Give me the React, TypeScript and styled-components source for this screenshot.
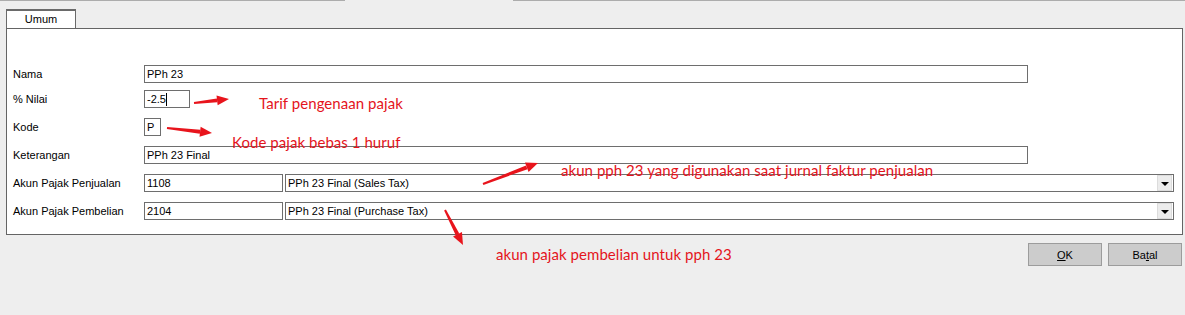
import React from "react";
import styled, { createGlobalStyle } from "styled-components";

const Global = createGlobalStyle`
  html, body { margin: 0; padding: 0; background: #eeeeee; }
  body {
    font-family: "Liberation Sans", Tahoma, Arial, sans-serif;
    font-size: 11px;
    color: #000;
  }
`;

const Page = styled.div`
  position: relative;
  width: 1185px;
  height: 315px;
  overflow: hidden;
  background: #eeeeee;
`;

const TopRule = styled.div`
  display: flex;
  height: 9px;
`;

const RuleSegment = styled.div<{ $w?: number; $line?: boolean }>`
  ${(p) => (p.$w ? `width: ${p.$w}px;` : "flex: 1;")}
  border-top: 1px solid ${(p) => (p.$line ? "#acacac" : "transparent")};
`;

const TabStrip = styled.div`
  display: flex;
  padding-left: 6px;
  height: 19px;
`;

const Tab = styled.div`
  box-sizing: border-box;
  width: 70px;
  height: 19px;
  border-top: 2px solid #6a6a6a;
  border-left: 1px solid #6a6a6a;
  border-right: 1px solid #6a6a6a;
  background: #ffffff;
  display: flex;
  align-items: center;
  justify-content: center;
  padding-bottom: 1px;
`;

const Panel = styled.div`
  box-sizing: border-box;
  margin-left: 6px;
  width: 1177px;
  height: 207px;
  border: 1px solid #646464;
  background: #ffffff;
  padding: 36px 0 0 6px;
  display: flex;
  flex-direction: column;
`;

const Row = styled.div<{ $mt: number }>`
  display: flex;
  align-items: center;
  height: 18px;
  margin-top: ${(p) => p.$mt}px;
`;

const Label = styled.div`
  width: 131px;
  flex: none;
`;

const Field = styled.div<{ $w: number }>`
  box-sizing: border-box;
  width: ${(p) => p.$w}px;
  height: 18px;
  border: 1px solid #6e6e6e;
  padding: 0 2px 0 2px;
  display: flex;
  align-items: center;
  flex: none;
  white-space: nowrap;
  background: #fff;
`;

const Caret = styled.span`
  display: inline-block;
  width: 1px;
  height: 13px;
  background: #000;
`;

const Combo = styled(Field)`
  margin-left: 2px;
  padding-right: 1px;
  justify-content: space-between;
`;

const ComboButton = styled.div`
  box-sizing: border-box;
  width: 15px;
  height: 16px;
  background: #ececec;
  border: 1px solid #dcdcdc;
  display: flex;
  align-items: center;
  justify-content: center;
`;

const Triangle = styled.div`
  width: 0;
  height: 0;
  border-left: 4px solid transparent;
  border-right: 4px solid transparent;
  border-top: 4px solid #000;
  margin-top: 1px;
`;

const ButtonRow = styled.div`
  display: flex;
  justify-content: flex-end;
  gap: 6px;
  margin-top: 8px;
  padding-right: 3px;
`;

const Button = styled.div`
  box-sizing: border-box;
  width: 74px;
  height: 23px;
  background: #cccccc;
  border: 1px solid #9c9c9c;
  display: flex;
  align-items: center;
  justify-content: center;
`;

const Mnemonic = styled.span`
  text-decoration: underline;
`;

const Note = styled.div<{ $x: number; $y: number }>`
  position: absolute;
  left: ${(p) => p.$x}px;
  top: ${(p) => p.$y}px;
  font-family: Lato, "Open Sans", sans-serif;
  font-size: 15px;
  letter-spacing: 0.05px;
  line-height: 15px;
  color: #e4141c;
  white-space: nowrap;
  pointer-events: none;
`;

const Overlay = styled.svg`
  position: absolute;
  left: 0;
  top: 0;
  pointer-events: none;
`;

type Pt = [number, number];

function Arrow({ from, to }: { from: Pt; to: Pt }) {
  const [x1, y1] = from;
  const [x2, y2] = to;
  const dx = x2 - x1;
  const dy = y2 - y1;
  const len = Math.hypot(dx, dy);
  const ux = dx / len;
  const uy = dy / len;
  const nx = -uy;
  const ny = ux;
  const head = 12;
  const hw = 5;
  const bx = x2 - ux * head;
  const by = y2 - uy * head;
  const tail = 1;
  const neck = 2;
  const shaft = [
    [x1 + nx * tail, y1 + ny * tail],
    [bx + nx * neck, by + ny * neck],
    [bx - nx * neck, by - ny * neck],
    [x1 - nx * tail, y1 - ny * tail],
  ];
  const tip = [
    [x2, y2],
    [bx + nx * hw, by + ny * hw],
    [bx - nx * hw, by - ny * hw],
  ];
  const s = (pts: number[][]) => pts.map((p) => p.join(",")).join(" ");
  return (
    <g fill="#e8141c">
      <polygon points={s(shaft)} />
      <polygon points={s(tip)} />
    </g>
  );
}

export default function App() {
  return (
    <Page>
      <Global />
      <TopRule>
        <RuleSegment $w={345} $line />
        <RuleSegment $w={168} />
        <RuleSegment $line />
      </TopRule>
      <TabStrip>
        <Tab>Umum</Tab>
      </TabStrip>
      <Panel>
        <Row $mt={0}>
          <Label>Nama</Label>
          <Field $w={884}>PPh 23</Field>
        </Row>
        <Row $mt={7}>
          <Label>% Nilai</Label>
          <Field $w={46}>
            -2.5<Caret />
          </Field>
        </Row>
        <Row $mt={10}>
          <Label>Kode</Label>
          <Field $w={17}>P</Field>
        </Row>
        <Row $mt={10}>
          <Label>Keterangan</Label>
          <Field $w={884}>PPh 23 Final</Field>
        </Row>
        <Row $mt={10}>
          <Label>Akun Pajak Penjualan</Label>
          <Field $w={139}>1108</Field>
          <Combo $w={889}>
            PPh 23 Final (Sales Tax)
            <ComboButton>
              <Triangle />
            </ComboButton>
          </Combo>
        </Row>
        <Row $mt={10}>
          <Label>Akun Pajak Pembelian</Label>
          <Field $w={139}>2104</Field>
          <Combo $w={889}>
            PPh 23 Final (Purchase Tax)
            <ComboButton>
              <Triangle />
            </ComboButton>
          </Combo>
        </Row>
      </Panel>
      <ButtonRow>
        <Button>
          <Mnemonic>O</Mnemonic>K
        </Button>
        <Button>
          Ba<Mnemonic>t</Mnemonic>al
        </Button>
      </ButtonRow>

      <Note $x={259} $y={96}>Tarif pengenaan pajak</Note>
      <Note $x={232} $y={135}>Kode pajak bebas 1 huruf</Note>
      <Note $x={561} $y={163}>akun pph 23 yang digunakan saat jurnal faktur penjualan</Note>
      <Note $x={496} $y={247}>akun pajak pembelian untuk pph 23</Note>

      <Overlay width={1185} height={315} viewBox="0 0 1185 315">
        <Arrow from={[194, 103]} to={[229, 99]} />
        <Arrow from={[167, 128]} to={[212, 133]} />
        <Arrow from={[483, 184]} to={[538, 163]} />
        <Arrow from={[445, 210]} to={[463, 245]} />
      </Overlay>
    </Page>
  );
}
